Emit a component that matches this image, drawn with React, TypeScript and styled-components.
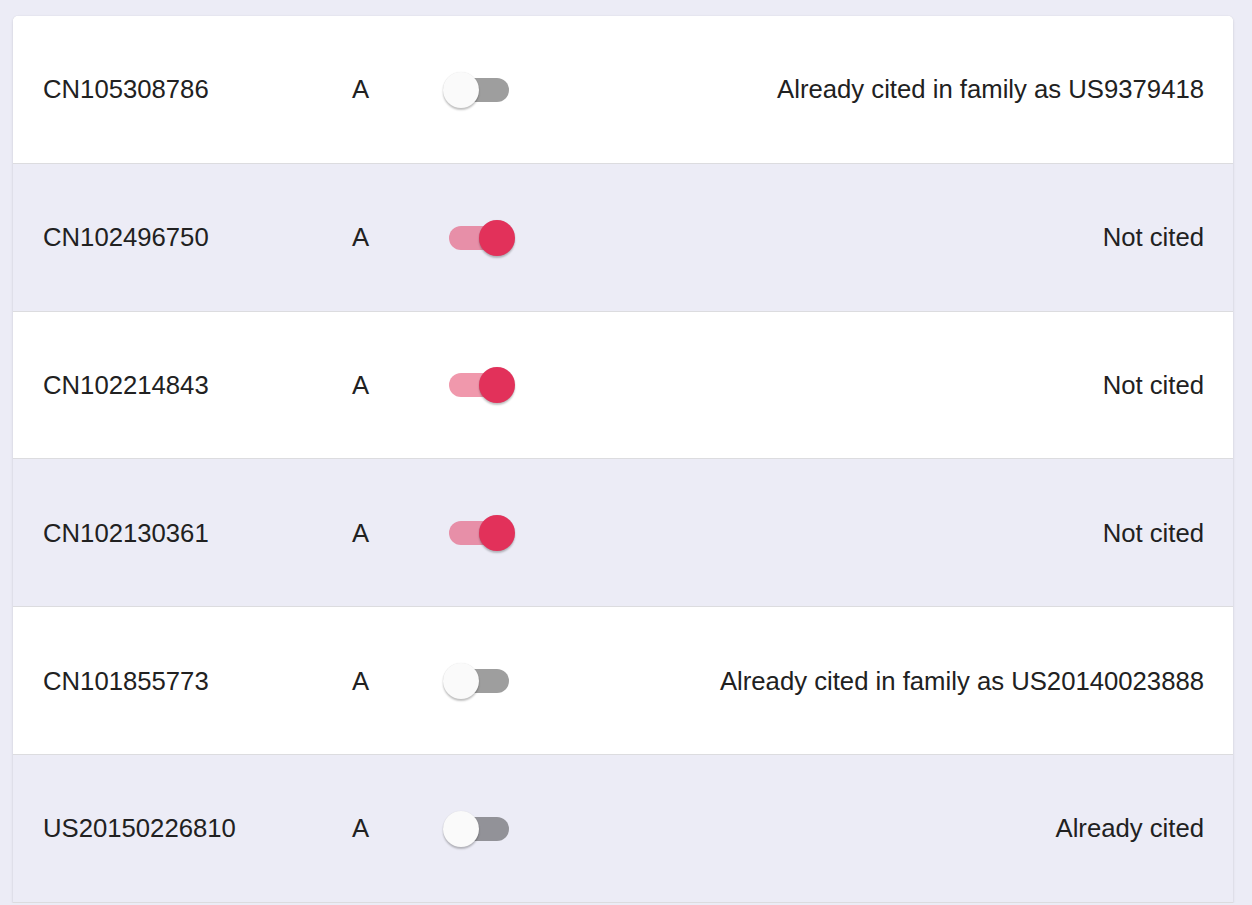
import React, { useState } from "react";
import styled, { createGlobalStyle } from "styled-components";

const GlobalStyle = createGlobalStyle`
  html, body {
    margin: 0;
    padding: 0;
    background: #ececf6;
  }
  body {
    font-family: "Liberation Sans", Helvetica, Arial, sans-serif;
    -webkit-font-smoothing: antialiased;
  }
`;

interface Citation {
  id: string;
  kind: string;
  on: boolean;
  status: string;
}

const rows: Citation[] = [
  { id: "CN105308786", kind: "A", on: false, status: "Already cited in family as US9379418" },
  { id: "CN102496750", kind: "A", on: true, status: "Not cited" },
  { id: "CN102214843", kind: "A", on: true, status: "Not cited" },
  { id: "CN102130361", kind: "A", on: true, status: "Not cited" },
  { id: "CN101855773", kind: "A", on: false, status: "Already cited in family as US20140023888" },
  { id: "US20150226810", kind: "A", on: false, status: "Already cited" },
];

export default function App() {
  const [items, setItems] = useState(rows);

  const toggle = (i: number) => {
    setItems((prev) => prev.map((r, idx) => (idx === i ? { ...r, on: !r.on } : r)));
  };

  return (
    <>
      <GlobalStyle />
      <Page>
        <Card>
          {items.map((r, i) => (
            <Row key={r.id} $alt={i % 2 === 1}>
              <Cell>{r.id}</Cell>
              <Cell>{r.kind}</Cell>
              <Switch $on={r.on} onClick={() => toggle(i)} role="switch" aria-checked={r.on}>
                <Track $on={r.on} />
                <Thumb $on={r.on} />
              </Switch>
              <Status>{r.status}</Status>
            </Row>
          ))}
        </Card>
      </Page>
    </>
  );
}

const Page = styled.div`
  padding: 16px 19px 0 13px;
`;

const Card = styled.div`
  background: #fff;
  border-radius: 5px 5px 0 0;
  box-shadow: 0 1px 3px rgba(0, 0, 0, 0.12), 0 0 1px rgba(0, 0, 0, 0.1);
  overflow: hidden;
`;

const Row = styled.div<{ $alt: boolean }>`
  box-sizing: border-box;
  height: 147.8px;
  display: grid;
  grid-template-columns: 309px 91px 72px 1fr;
  align-items: center;
  padding: 1px 29px 0 30px;
  background: ${(p) => (p.$alt ? "#ececf6" : "#fff")};
  border-bottom: 1px solid #dcdcdf;
  color: #212121;
  font-size: 25.7px;
`;

const Cell = styled.div`
  white-space: nowrap;
`;

const Status = styled.div`
  text-align: right;
  white-space: nowrap;
`;

const Switch = styled.div<{ $on: boolean }>`
  position: relative;
  width: 72px;
  height: 36px;
  cursor: pointer;
`;

const Track = styled.div<{ $on: boolean }>`
  position: absolute;
  left: 6px;
  right: 6px;
  top: 6px;
  height: 24px;
  border-radius: 12px;
  background: ${(p) => (p.$on ? "#e2315a" : "#000")};
  opacity: ${(p) => (p.$on ? 0.5 : 0.38)};
`;

const Thumb = styled.div<{ $on: boolean }>`
  position: absolute;
  top: 0;
  left: ${(p) => (p.$on ? "36px" : "0")};
  width: 36px;
  height: 36px;
  border-radius: 50%;
  background: ${(p) => (p.$on ? "#e2315a" : "#fafafa")};
  box-shadow: 0 2px 2px rgba(0, 0, 0, 0.24), 0 0 1px rgba(0, 0, 0, 0.12);
  transition: left 0.15s ease;
`;
